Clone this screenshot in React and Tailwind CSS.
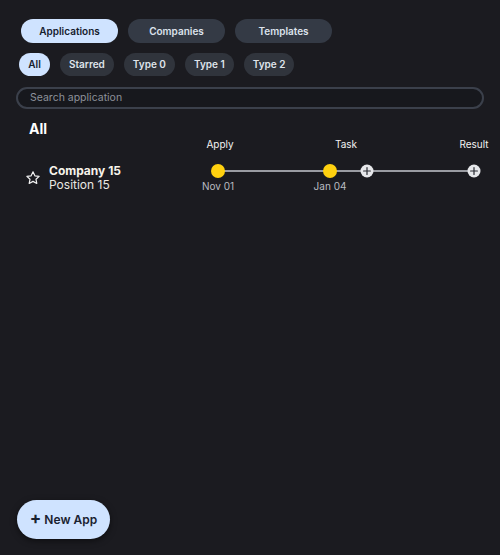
import React from "react";

const tabs = ["Applications", "Companies", "Templates"];
const chips = ["All", "Starred", "Type 0", "Type 1", "Type 2"];

const Plus = ({ className }) => (
    <svg viewBox="0 0 14 14" className={className}>
        <circle cx="7" cy="7" r="6.5" fill="#e6e7ea" />
        <path d="M7 3.6v6.8M3.6 7h6.8" stroke="#2a2c33" strokeWidth="1.2" strokeLinecap="round" />
    </svg>
);

const Star = () => (
    <svg viewBox="0 0 24 24" className="w-[16px] h-[16px]" fill="none" stroke="#f2f2f2" strokeWidth="1.8" strokeLinejoin="round">
        <path d="M12 2.8l2.8 5.9 6.4.8-4.7 4.4 1.2 6.3L12 17.1l-5.7 3.1 1.2-6.3-4.7-4.4 6.4-.8z" />
    </svg>
);

export default function App() {
    return (
        <div
            className="min-h-[555px] w-[500px] bg-[#1b1b20] flex flex-col"
            style={{ fontFamily: "Inter, 'Noto Sans', sans-serif" }}
        >
            {/* Tabs */}
            <div className="flex gap-[10px] pl-[21px] pt-[19px]">
                {tabs.map((t, i) => (
                    <div
                        key={t}
                        className={`w-[97px] h-[24px] rounded-full flex items-center justify-center text-[10px] font-semibold ${
                            i === 0 ? "bg-[#cfe3ff] text-[#15202e]" : "bg-[#343a45] text-[#dce2ec]"
                        }`}
                    >
                        {t}
                    </div>
                ))}
            </div>

            {/* Chips */}
            <div className="flex gap-[10px] pl-[19px] mt-[10px]">
                {chips.map((c, i) => (
                    <div
                        key={c}
                        className={`h-[23px] min-w-[31px] px-[9px] rounded-full flex items-center justify-center text-[10px] font-semibold ${
                            i === 0 ? "bg-[#cfe3ff] text-[#15202e]" : "bg-[#30343c] text-[#dfe3ea]"
                        }`}
                    >
                        {c}
                    </div>
                ))}
            </div>

            {/* Search */}
            <div className="mx-[16px] mt-[11px] h-[22px] rounded-full border-2 border-[#3b404b] bg-[#17181d] flex items-center pl-[12px]">
                <span className="text-[10.5px] text-[#8d919a]">Search application</span>
            </div>

            {/* List */}
            <div className="pl-[29px] mt-[11px] text-[14px] font-bold text-white leading-[18px]">All</div>

            <div className="flex -mt-[1px]">
                <div className="w-[200px]" />
                <div className="relative flex-1 h-[16px] text-[10px] text-[#f2f2f2]">
                    <span className="absolute left-[20px] -translate-x-1/2 top-0">Apply</span>
                    <span className="absolute left-[146px] -translate-x-1/2 top-0">Task</span>
                    <span className="absolute left-[274px] -translate-x-1/2 top-0">Result</span>
                </div>
            </div>

            <div className="flex mt-[12px]">
                <div className="w-[200px] flex items-center pl-[25px] gap-[8px] -mt-[2px]">
                    <Star />
                    <div className="leading-[14px]">
                        <div className="text-[12px] font-bold text-[#f7f3ea]">Company 15</div>
                        <div className="text-[12px] text-[#e9e7e2]">Position 15</div>
                    </div>
                </div>
                <div className="relative flex-1 h-[28px]">
                    <div className="absolute left-[18px] w-[256px] top-[5px] h-[1.5px] bg-[#9a9ca2]" />
                    <div className="absolute left-[11px] top-[-1px] w-[14px] h-[14px] rounded-full bg-[#ffd10f]" />
                    <div className="absolute left-[123px] top-[-1px] w-[14px] h-[14px] rounded-full bg-[#ffd10f]" />
                    <Plus className="absolute left-[160px] top-[-1px] w-[14px] h-[14px]" />
                    <Plus className="absolute left-[267px] top-[-1px] w-[14px] h-[14px]" />
                    <span className="absolute left-[18px] -translate-x-1/2 top-[14px] text-[10px] text-[#b9bbc0]">Nov 01</span>
                    <span className="absolute left-[130px] -translate-x-1/2 top-[14px] text-[10px] text-[#b9bbc0]">Jan 04</span>
                </div>
            </div>

            {/* New App */}
            <div className="mt-auto pl-[17px] pb-[16px]">
                <button className="w-[93px] h-[39px] rounded-full bg-[#cfe3ff] text-[#1a2230] text-[12px] font-semibold flex items-center justify-center gap-[3px] shadow-[0_2px_6px_rgba(0,0,0,0.5)]">
                    <span className="text-[17px] font-bold leading-none -mt-[3px]">+</span>
                    New App
                </button>
            </div>
        </div>
    );
}
